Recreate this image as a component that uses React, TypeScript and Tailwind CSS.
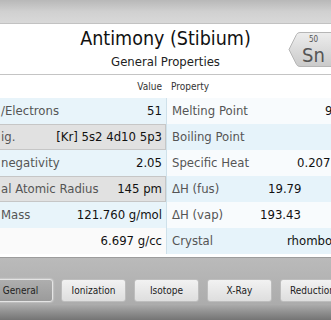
const left = [
  { label: "/Electrons", value: "51", tone: "blue" },
  { label: "ig.", value: "[Kr] 5s2 4d10 5p3", tone: "gray" },
  { label: "negativity", value: "2.05", tone: "blue" },
  { label: "al Atomic Radius", value: "145 pm", tone: "gray" },
  { label: "Mass", value: "121.760 g/mol", tone: "blue" },
  { label: "", value: "6.697 g/cc", tone: "white" },
];

// label boxes are sized so each value starts where the reference shows it
const right = [
  { label: "Melting Point", value: "903.78 K", box: "w-[153px]" },
  { label: "Boiling Point", value: "1860 K", box: "w-[170px]" },
  { label: "Specific Heat", value: "0.207 J/gK", box: "w-[125px]" },
  { label: "ΔH (fus)", value: "19.79", box: "w-[96px]" },
  { label: "ΔH (vap)", value: "193.43", box: "w-[88px]" },
  { label: "Crystal", value: "rhombohedral", box: "w-[115px]" },
];

const tabs = ["General", "Ionization", "Isotope", "X-Ray", "Reduction"];

function SymbolTab() {
  return (
    <div className="absolute left-[288px] top-[8px] h-[35px] w-[50px]">
      <svg width="50" height="35" viewBox="0 0 50 35" className="absolute inset-0">
        <defs>
          <linearGradient id="tabfill" x1="0" y1="0" x2="0" y2="1">
            <stop offset="0" stopColor="#ededed" />
            <stop offset="1" stopColor="#cacaca" />
          </linearGradient>
        </defs>
        <path
          d="M1 17.5 L8.5 2.5 Q9.5 0.5 12 0.5 L50 0.5 L50 34.5 L12 34.5 Q9.5 34.5 8.5 32.5 Z"
          fill="url(#tabfill)"
          stroke="#b6b6b6"
        />
      </svg>
      <div className="relative flex flex-col items-center pl-[9px] pr-[8px] leading-none text-[#555]">
        <span className="mt-[4px] text-[8px]">50</span>
        <span className="mt-[1px] text-[20px]">Sn</span>
      </div>
    </div>
  );
}

export default function App() {
  return (
    <div className="flex h-[320px] w-[331px] flex-col overflow-hidden bg-white font-['DejaVu_Sans_Condensed','DejaVu_Sans',sans-serif]">
      {/* top bar */}
      <div className="h-[24px] shrink-0 border-b border-[#c2c2c2] bg-gradient-to-b from-[#b8b8b8] via-[#d0d0d0] to-[#d9d9d9]" />

      {/* element header */}
      <div className="relative flex h-[50px] shrink-0 flex-col items-center pt-[3px]">
        <h1 className="text-[19.5px] leading-[24px] text-[#111]">Antimony (Stibium)</h1>
        <p className="mt-[3px] text-[13px] leading-[16px] text-[#222]">General Properties</p>
        <SymbolTab />
      </div>

      {/* table */}
      <div className="w-[390px] border-t border-[#c4c4c4]">
        <div className="grid h-[23px] grid-cols-[166px_224px] items-center text-[10px] text-[#333]">
          <span className="pr-[4px] text-right">Value</span>
          <span className="pl-[5px]">Property</span>
        </div>
        {left.map((row, i) => (
          <div key={i} className="grid h-[26px] grid-cols-[166px_224px] text-[13px]">
            <div
              className={
                row.tone === "gray"
                  ? "flex items-center justify-between border-y border-r border-[#c6c6c6] bg-[#e1e1e1] pr-[3px] pl-[1px]"
                  : row.tone === "blue"
                    ? "flex items-center justify-between bg-[#e8f4fa] pr-[4px] pl-[1px]"
                    : "flex items-center justify-between bg-[#fafafa] pr-[4px] pl-[1px]"
              }
            >
              <span className="text-[#555]">{row.label}</span>
              <span className="text-[#111]">{row.value}</span>
            </div>
            <div
              className={
                i % 2 === 0
                  ? "flex items-center whitespace-nowrap border-l border-[#cfe1ea] bg-[#f8fbfd] pl-[5px]"
                  : "flex items-center whitespace-nowrap border-l border-[#cfe1ea] bg-[#e6f3fa] pl-[5px]"
              }
            >
              <span className={`${right[i].box} shrink-0 text-[#555]`}>{right[i].label}</span>
              <span className="text-[#111]">{right[i].value}</span>
            </div>
          </div>
        ))}
      </div>

      {/* tab bar */}
      <div className="mt-[3px] flex flex-1 items-start gap-[8px] border-t border-[#9c9c9c] bg-gradient-to-b from-[#bababa] via-[#acacac] via-75% to-[#747474] pt-[21px]">
        {tabs.map((t, i) => (
          <div
            key={t}
            className={
              i === 0
                ? "-ml-[12px] flex h-[23px] w-[65px] shrink-0 items-center justify-center rounded-[3px] border border-[#e4e4e4] bg-gradient-to-b from-[#aeaeae] to-[#9b9b9b] text-[10px] text-[#222] shadow-[0_0_2px_rgba(255,255,255,0.8)]"
                : "flex h-[23px] w-[65px] shrink-0 items-center justify-center rounded-[3px] border border-[#bdbdbd] bg-gradient-to-b from-[#f2f2f2] to-[#dedede] text-[10px] text-[#222]"
            }
          >
            {t}
          </div>
        ))}
      </div>
    </div>
  );
}
